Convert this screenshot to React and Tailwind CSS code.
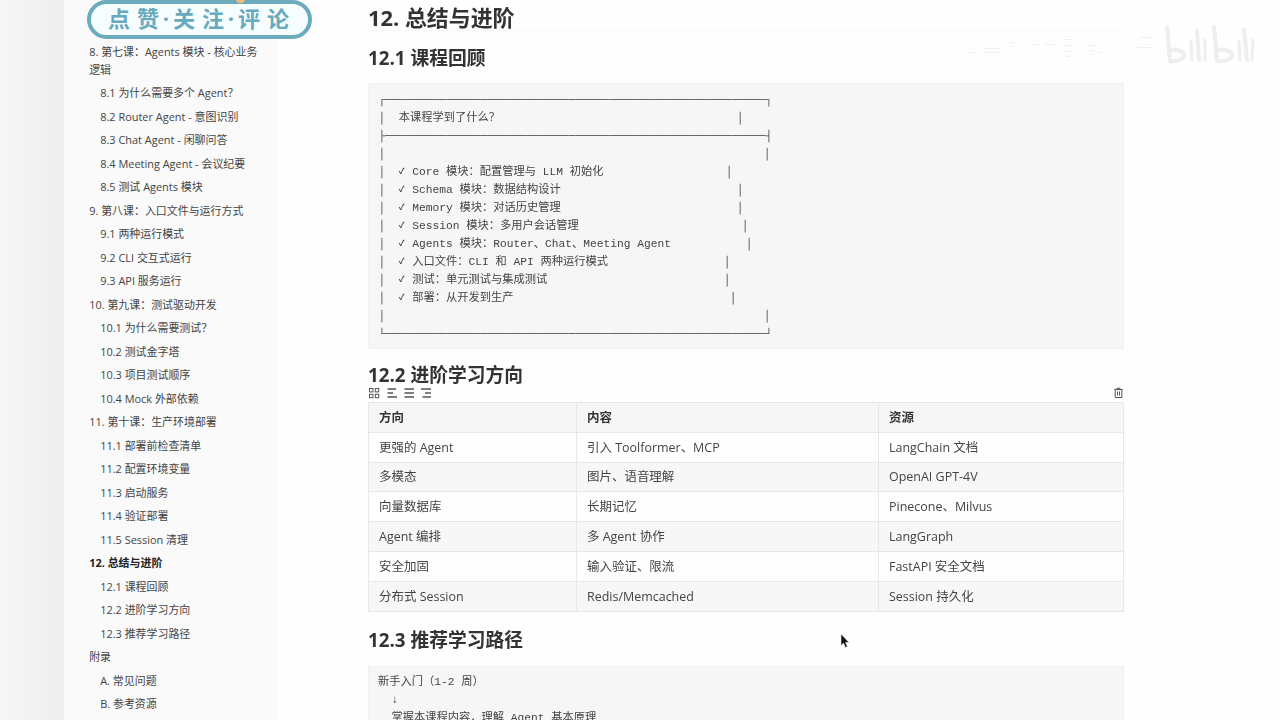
const outline = [
  { level: 1, text: "8. 第七课：Agents 模块 - 核心业务逻辑" },
  { level: 2, text: "8.1 为什么需要多个 Agent？" },
  { level: 2, text: "8.2 Router Agent - 意图识别" },
  { level: 2, text: "8.3 Chat Agent - 闲聊问答" },
  { level: 2, text: "8.4 Meeting Agent - 会议纪要" },
  { level: 2, text: "8.5 测试 Agents 模块" },
  { level: 1, text: "9. 第八课：入口文件与运行方式" },
  { level: 2, text: "9.1 两种运行模式" },
  { level: 2, text: "9.2 CLI 交互式运行" },
  { level: 2, text: "9.3 API 服务运行" },
  { level: 1, text: "10. 第九课：测试驱动开发" },
  { level: 2, text: "10.1 为什么需要测试？" },
  { level: 2, text: "10.2 测试金字塔" },
  { level: 2, text: "10.3 项目测试顺序" },
  { level: 2, text: "10.4 Mock 外部依赖" },
  { level: 1, text: "11. 第十课：生产环境部署" },
  { level: 2, text: "11.1 部署前检查清单" },
  { level: 2, text: "11.2 配置环境变量" },
  { level: 2, text: "11.3 启动服务" },
  { level: 2, text: "11.4 验证部署" },
  { level: 2, text: "11.5 Session 清理" },
  { level: 1, text: "12. 总结与进阶", active: true },
  { level: 2, text: "12.1 课程回顾" },
  { level: 2, text: "12.2 进阶学习方向" },
  { level: 2, text: "12.3 推荐学习路径" },
  { level: 1, text: "附录" },
  { level: 2, text: "A. 常见问题" },
  { level: 2, text: "B. 参考资源" },
];

// width = distance from the left bar to the end of the right bar
const reviewLines = [
  { rule: "┌" + "─".repeat(56) + "┐" },
  { text: "本课程学到了什么？", width: 365 },
  { rule: "├" + "─".repeat(56) + "┤" },
  { text: "", width: 392 },
  { check: true, text: "Core 模块：配置管理与 LLM 初始化", width: 354 },
  { check: true, text: "Schema 模块：数据结构设计", width: 365 },
  { check: true, text: "Memory 模块：对话历史管理", width: 365 },
  { check: true, text: "Session 模块：多用户会话管理", width: 370 },
  { check: true, text: "Agents 模块：Router、Chat、Meeting Agent", width: 374 },
  { check: true, text: "入口文件：CLI 和 API 两种运行模式", width: 352 },
  { check: true, text: "测试：单元测试与集成测试", width: 352 },
  { check: true, text: "部署：从开发到生产", width: 358 },
  { text: "", width: 392 },
  { rule: "└" + "─".repeat(56) + "┘" },
];

const directions = [
  ["更强的 Agent", "引入 Toolformer、MCP", "LangChain 文档"],
  ["多模态", "图片、语音理解", "OpenAI GPT-4V"],
  ["向量数据库", "长期记忆", "Pinecone、Milvus"],
  ["Agent 编排", "多 Agent 协作", "LangGraph"],
  ["安全加固", "输入验证、限流", "FastAPI 安全文档"],
  ["分布式 Session", "Redis/Memcached", "Session 持久化"],
];

function Sidebar() {
  return (
    <aside className="w-[213px] shrink-0 bg-[#fafafa] border-r border-[#f7f7f7] pt-[40.2px] pl-[25.2px] pr-[14px] text-[10.95px] leading-[17.5px] text-[#444]">
      {outline.map((item) => (
        <div
          key={item.text}
          className={`py-[3px] ${item.level === 2 ? "pl-[11px]" : ""} ${item.active ? "font-bold text-[#222]" : ""}`}
        >
          {item.text}
        </div>
      ))}
    </aside>
  );
}

function ReviewLine({ line }) {
  if (line.rule) {
    return <div className="tracking-[0.04px]">{line.rule}</div>;
  }
  return (
    <div className="flex" style={{ width: line.width }}>
      <span className="w-[20.2px] shrink-0">│</span>
      {line.check && <span className="w-[13.5px] shrink-0 text-[8px] font-bold">✓</span>}
      <span className="flex-1">{line.text}</span>
      <span>│</span>
    </div>
  );
}

function TableTools() {
  return (
    <div className="flex h-[13px] items-center justify-between text-[#555]">
      <div className="flex items-center gap-[7px]">
        <svg width="12" height="12" viewBox="0 0 12 12" fill="none" stroke="currentColor">
          <rect x="1.5" y="1.5" width="3.4" height="3.4" />
          <rect x="7.3" y="1.5" width="3.4" height="3.4" />
          <rect x="1.5" y="7.3" width="3.4" height="3.4" />
          <rect x="7.3" y="7.3" width="3.4" height="3.4" />
        </svg>
        <svg width="10" height="12" viewBox="0 0 10 12" stroke="currentColor" strokeWidth="1.4">
          <path d="M0.5 2H9M0.5 6H6M0.5 10H10" />
        </svg>
        <svg width="10" height="12" viewBox="0 0 10 12" stroke="currentColor" strokeWidth="1.4">
          <path d="M0.5 2H10M0.5 6H10M0.5 10H10" />
        </svg>
        <svg width="10" height="12" viewBox="0 0 10 12" stroke="currentColor" strokeWidth="1.4">
          <path d="M0 2H10M4 6H10M1.5 10H10" />
        </svg>
      </div>
      <svg width="10" height="12" viewBox="0 0 10 12" fill="none" stroke="currentColor">
        <path d="M0.5 2.5H8.5M3 2.2V1.2H6V2.2M1.2 2.5V10.5H7.8V2.5M3.5 4.5V8.5M5.5 4.5V8.5" />
      </svg>
    </div>
  );
}

function Banner() {
  return (
    <div className="absolute left-[87px] top-0 flex h-[39px] w-[225px] items-center rounded-[20px] border-4 border-[#6cabbc] bg-[#f5fdfe] pb-[3px] pl-[17px] text-[22px] font-bold leading-none text-[#68a9bd]">
      <span className="w-[29px]">点</span>
      <span className="w-[22px]">赞</span>
      <span className="flex w-[14px] justify-center">·</span>
      <span className="w-[29px]">关</span>
      <span className="w-[22px]">注</span>
      <span className="flex w-[14px] justify-center">·</span>
      <span className="w-[29px]">评</span>
      <span>论</span>
      <span className="absolute left-[145px] -top-[5px] h-[4px] w-[9px] rounded-b-full bg-[#f5bd7c]" />
    </div>
  );
}

function Watermark() {
  return (
    <svg className="absolute left-[960px] top-[20px]" width="300" height="48" viewBox="0 0 300 48" fill="none">
      <g stroke="#f0f0f0" strokeWidth="1">
        <path d="M8 32.5h8M25 28.5h14M24 32.5h16M47 22.5h8M49 26.5h6M72 24.5h8M85 24.5h10M104 19.5h8M104 25.5h8M104 31.5h8M106 36.5h5M128 25.5h9M129 30.5h5M129 34.5h5M138 32.5h5M180 17.5h12M177 27.5h15" />
      </g>
      <g stroke="#eeeeee" strokeWidth="4" strokeLinecap="round" strokeLinejoin="round">
        <path d="M207 7L210 41C218 42 226 38 224 34C222 30 215 29 210 30" />
        <path d="M254 7L257 41C266 42 274 38 272 34C270 30 263 29 258 30M237 11L239 40M284 10L287 40" />
        <path d="M231 21L232 40M245 20V40M279 21L280 40M293 20L292 40" strokeWidth="3" />
      </g>
    </svg>
  );
}

export default function App() {
  return (
    <div className="relative flex h-[720px] w-[1280px] overflow-hidden bg-[#fefefe] font-['Open_Sans','Noto_Sans_CJK_SC',sans-serif] text-[#333]">
      <div className="w-[64px] shrink-0 bg-linear-to-r from-[#f6f6f6] to-[#eeeeee]" />
      <Sidebar />

      <main className="ml-[91px] w-[756px] shrink-0 will-change-transform">
        <h1 className="h-[31px] border-b border-[#f9f6f6] pt-[4px] text-[21.9px] font-bold leading-[28px]">12. 总结与进阶</h1>
        <h2 className="mt-[13px] text-[18.75px] font-bold leading-[28px]">12.1 课程回顾</h2>

        <pre className="mt-[11px] h-[266px] border border-[#f0f0f0] bg-[#f6f6f6] pl-[9.5px] pt-[7px] font-['Liberation_Mono','Noto_Sans_CJK_SC',monospace] text-[11.25px] leading-[18px] text-[#444]">
          {reviewLines.map((line, i) => (
            <ReviewLine key={i} line={line} />
          ))}
        </pre>

        <h2 className="mt-[12px] h-[25px] text-[18.75px] font-bold leading-[28px]">12.2 进阶学习方向</h2>
        <TableTools />

        <table className="mt-[3px] w-full table-fixed border-collapse text-[12.48px] leading-[18px] text-[#444]">
          <colgroup>
            <col className="w-[208px]" />
            <col className="w-[302px]" />
            <col />
          </colgroup>
          <thead>
            <tr className="h-[29.8px] bg-[#f6f6f6] text-left text-[#333]">
              <th className="border border-[#e8e8e8] px-[10px] pt-[1px] pb-0">方向</th>
              <th className="border border-[#e8e8e8] px-[10px] pt-[1px] pb-0">内容</th>
              <th className="border border-[#e8e8e8] px-[10px] pt-[1px] pb-0">资源</th>
            </tr>
          </thead>
          <tbody>
            {directions.map((row) => (
              <tr key={row[0]} className="h-[29.8px] even:bg-[#f7f7f7]">
                {row.map((cell) => (
                  <td key={cell} className="border border-[#e8e8e8] px-[10px] pt-[1px] pb-0">{cell}</td>
                ))}
              </tr>
            ))}
          </tbody>
        </table>

        <h2 className="mt-[14px] text-[18.75px] font-bold leading-[28px]">12.3 推荐学习路径</h2>
        <pre className="mt-[12px] h-[80px] border border-[#f0f0f0] bg-[#f6f6f6] pl-[9px] pt-[6px] font-['Liberation_Mono','Noto_Sans_CJK_SC',monospace] text-[11.25px] leading-[18px] text-[#444]">
          {"新手入门（1-2 周）\n  ↓\n  掌握本课程内容，理解 Agent 基本原理"}
        </pre>
      </main>

      <Banner />
      <Watermark />

      {/* mouse pointer */}
      <svg className="absolute left-[840px] top-[633px]" width="10" height="16" viewBox="0 0 10 16">
        <path d="M1 1V12.5L3.6 10.2L5.4 14.5L7.4 13.6L5.6 9.5H9Z" fill="#111" stroke="#eee" strokeWidth="0.6" />
      </svg>
    </div>
  );
}
